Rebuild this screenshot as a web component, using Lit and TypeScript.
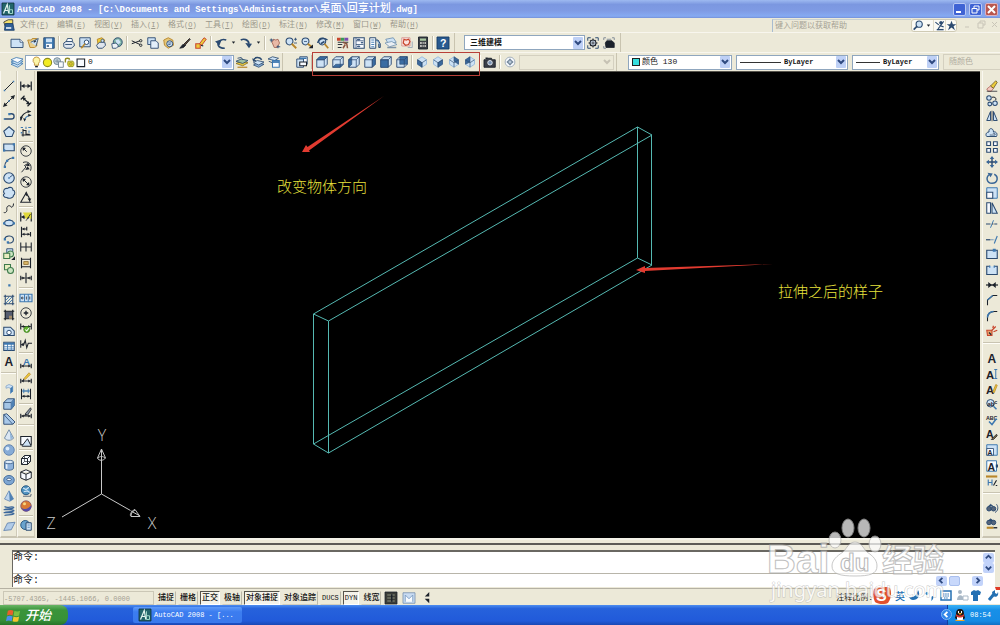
import { LitElement, html, svg, css } from 'lit';
import { customElement } from 'lit/decorators.js';
import { classMap } from 'lit/directives/class-map.js';

/* ---------- icon library: every icon is a list of strokes on a 16 x 16 grid ---------- */

type Stroke = [d: string, stroke: string, fill?: string, width?: number];
type Glyph = { t: string; x: number; y: number; s: number; c: string };
type Part = Stroke | Glyph;

const K = '#1c222b';
const N = '#2b4a70';
const B = '#3d78b0';
const L = '#cde2f5';
const M = '#8fb4da';
const W = '#f8fbff';
const G = '#b8862a';
const Y = '#eccb3a';
const R = '#c8452c';
const O = 'none';

const ring = (x: number, y: number, r: number) =>
  `M${x - r} ${y}a${r} ${r} 0 1 0 ${2 * r} 0a${r} ${r} 0 1 0 ${-2 * r} 0z`;
const box = (x: number, y: number, w: number, h: number) => `M${x} ${y}h${w}v${h}h${-w}z`;
const dimBase: Stroke[] = [
  ['M1 2v12M15 2v12M2 8h12', K, O, 1.6],
  ['M2 8l4-3v6zM14 8l-4-3v6z', O, K],
];
const lowDim: Stroke[] = [
  ['M1 9v6M15 9v6M2 12h12', K, O, 1.5],
  ['M2 12l3-2v4zM14 12l-3-2v4z', O, K],
];
const cube = (face: string): Stroke[] => [
  ['M1 5l4-4h10v10l-4 4H1z', N, L, 1.2],
  [face, N, '#3a6da3', 0.8],
  ['M1 5h10v10M11 5l4-4', N, O, 1],
];
const iso = (face: string): Stroke[] => [
  ['M8 1l6 4v6l-6 4-6-4V5z', M, L, 1.1],
  [face, N, '#3a689b', 0.8],
  ['M2 5l6 4 6-4M8 9v6', N, O, 0.9],
];

const icons: Record<string, Part[]> = {
  new: [['M0 3h12l4 4v7H0z', N, L, 1.2], ['M12 3v4h4', N, W, 1]],
  open: [['M1 4h5l1-2h6v10l-3 2H4z', G, '#e9cf8b', 1.2], ['M5 7l10-5-3 10', N, L, 1.1], ['M9 7l3-2', K, O, 1.4]],
  save: [[box(1, 1, 14, 14), N, B, 1.2], [box(4, 2, 8, 5), O, L], [box(4, 9, 8, 6), O, W], ['M5 12h3', N, O, 2]],
  plot: [['M4 7l2-5h6l1 5', N, W, 1.1], ['M1 8l3-2h8l3 3v3l-4 3H4l-3-2z', N, '#dfe6ee', 1.2], ['M3 10h9', N, O, 1.2]],
  preview: [[box(1, 1, 14, 12), N, L, 1.2], [ring(10, 7, 3), N, W, 1.3], ['M8 9l-5 6', G, O, 2]],
  publish: [['M3 3l6-2 4 3-2 5-7 1z', G, Y, 1.2], ['M2 11l4-4h7l1 4-4 4H4z', N, '#dfe6ee', 1.2], [ring(10, 5, 2), N, L, 1]],
  dwf: [[ring(9, 7, 6), N, '#7bb0a0', 1.2], ['M6 4l4-1 3 4-3 3-3-2z', O, L], ['M1 9l6-1 3 4-3 3H2z', N, '#eef2f6', 1.1]],
  cut: [['M1 5l11 5M1 9l11-4', K, O, 1.3], [ring(13, 5, 1.6), K, O, 1.2], [ring(13, 11, 1.6), K, O, 1.2]],
  copy: [[box(1, 1, 10, 9), N, L, 1.2], ['M5 5h7l3 3v7H5z', N, '#e3effa', 1.2]],
  paste: [['M1 4l6-3 6 3 1 7-7 4-5-4z', G, '#e5c676', 1.2], [ring(9, 9, 4), N, L, 1.2], ['M7 8h4M7 10h3', N]],
  match: [['M1 15l4-5 4 1-3 3z', K, K], ['M6 10l8-8 1 1-7 8z', K, '#6a4a30', 1.2]],
  block: [['M1 15V9h6v6z', R, Y, 1.4], ['M6 9l6-8 3 2-6 8z', R, Y, 1.3], ['M8 11l3 1', K, O, 1.6]],
  undo: [['M13 15C3 15 2 8 7 5c2-2 5-2 8-1', N, O, 2.2], ['M0 6l9-3-3 8z', O, N]],
  redo: [['M1 4c4-2 10-1 11 5', N, O, 2.2], ['M7 8l9 1-4 6z', O, N]],
  drop: [['M5 6h6l-3 4z', O, K]],
  pan: [['M4 7l2-4 3 1 3-1 2 5-3 6H7z', '#a06050', '#e9b9a6', 1.1], ['M1 4h5M3 2v5M12 11v4M10 13h5', N, O, 1.2]],
  zoomrt: [[ring(6, 6, 4.6), N, L, 1.4], ['M9 9l6 6', G, O, 2.4], ['M12 3h4M14 1v4M12 8h4', N, O, 1.1]],
  zoomwin: [[ring(6, 6, 4.6), N, L, 1.4], ['M4 6h4', N], ['M9 9l5 4', G, O, 2.4], ['M10 15h6v-5z', O, K]],
  zoomprev: [[ring(7, 6, 4.6), N, L, 1.4], ['M10 9l5 6', G, O, 2.4], ['M1 8c1-6 8-8 13-4', N, O, 2], ['M5 9l5-3', N, O, 2]],
  props: [['M0 1h5v4H0z', O, R], ['M5 1h5v4H5z', O, '#3b9a56'], ['M10 1h5v4h-5z', O, '#7b4bb0'], ['M1 7h14M1 10h6M1 14h5', K, O, 1.2], ['M8 7l5 2 1 6M8 15l3-5', '#8a5540', O, 2]],
  dcenter: [[box(1, 1, 14, 14), N, W, 1.4], ['M4 1v14M4 5h10M4 10h10', N], [box(6, 3, 3, 1), N, B], [box(11, 7, 2, 1), N, B], [box(6, 12, 3, 1), N, B]],
  palettes: [[box(1, 1, 8, 14), N, W, 1.3], ['M3 4h4M3 7h4M3 10h4M3 13h4', B, O, 1.2], ['M9 4h3l3 5v5h-2V9', N, M, 1.3]],
  sheet: [['M1 3l10-2 4 6-10 3z', '#6b8dad', L, 1.1], ['M0 8l9-2 7 4-10 3z', '#6b8dad', '#e9eef3', 1], ['M3 14h12', '#7d93a8', O, 2]],
  markup: [['M1 1h11v11H1z', '#d08a88', '#fbe3e0', 1], ['M4 3l3 1 3-1 2 3-2 4-4 1-3-3z', R, O, 1.6], ['M9 14h6V6', '#9aa8b8', O, 1.2]],
  calc: [[box(2, 0, 12, 16), K, '#3d4046', 1.2], [box(4, 2, 8, 3), O, '#a8c7a0'], ['M4 8h8M4 12h8', '#e8e4e0', O, 2], ['M7 6v9M9.5 6v9', '#3d4046', O, 1]],
  help: [[box(0, 0, 16, 16), '#153a66', '#28598f', 1.2], { t: '?', x: 4, y: 13, s: 14, c: '#fff' }],
  gear: [['M1 5V1h4M11 1h4v4M15 11v4h-4M5 15H1v-4', N, O, 1.3], [ring(8, 8, 4), K, '#b7c4d3', 1.4], [ring(8, 8, 1.3), K, W, 1], ['M8 2v2M8 12v2M2 8h2M12 8h2M4 4l1 1M11 11l1 1M12 4l-1 1M5 11l-1 1', K, O, 1.4]],
  home: [['M1 4V1h3M12 1h3v3M1 12v3h3', '#7c8794', O, 1.2], ['M3 8l2-3h7l3 3v6H4z', K, K], ['M5 3h6', '#7c8794', O, 1.2]],
  layers: [['M0 11l7-3 9 2-7 5z', B, L, 1.1], ['M0 8l7-3 9 2-7 5z', B, L, 1.1], ['M0 5l7-3 9 2-7 5z', B, W, 1.1]],
  layercur: [['M0 10l7-3 9 2-7 4z', '#84712c', Y, 1.1], ['M0 7l7-3 9 2-7 4z', N, '#9fc0a2', 1.1], ['M2 15h13', G, O, 1.6], ['M2 3l5-1 2 3', N, O, 1.2]],
  layerprev: [['M2 12l5-3 9 2-7 4z', N, M, 1.1], ['M2 9l5-3 9 2-7 4z', N, L, 1.1], ['M2 6c1-5 8-5 11-1', N, O, 2], ['M0 3l2 5 4-2z', O, N]],
  layerstate: [['M0 4l6-3 8 2-5 3z', N, L, 1.1], ['M1 7l5 2', N, O, 1.2], [box(6, 6, 9, 9), B, W, 1.4], ['M6 8h9', B, O, 2.4]],
  bulb: [['M8 0a5 5 0 0 0-3 9v3h6V9A5 5 0 0 0 8 0z', G, '#fdf6a8', 1.2], ['M6 14h4', K, O, 2]],
  sun: [[ring(8, 8, 6), '#8f8c20', '#f3ec22', 1.6]],
  freeze: [[ring(6, 6, 5), '#6d8293', '#bfd0d8', 1.3], [box(8, 7, 7, 8), '#6d8293', W, 1.3], ['M3 6h6M6 3v6', '#6d8293']],
  lock: [['M2 8V4c0-3 6-3 6 0', '#8e8a22', O, 2], ['M6 6h7c2 2 2 6 0 8H7c-2-2-2-6-1-8z', '#8e8a22', '#d9d438', 1.2], [ring(10, 10, 2), '#8e8a22', Y]],
  square: [[box(3, 3, 11, 11), K, W, 1.6]],
  named: [['M5 1h10v10H5z', N, W, 1.2], ['M1 4h9v11H1z', N, L, 1.2], ['M5 8h9v5H5z', K, W, 1.4], ['M5 3h9', B, O, 2]],
  vtop: cube('M1 5l4-4h10l-4 4z'),
  vbottom: cube('M1 15l4-4h10l-4 4z'),
  vleft: cube('M1 5l4-4v10l-4 4z'),
  vright: cube('M11 5l4-4v10l-4 4z'),
  vfront: cube('M1 5h10v10H1z'),
  vback: cube('M5 1h10v10H5z'),
  isosw: iso('M2 5l6 4v6l-6-4z'),
  isose: iso('M14 5l-6 4v6l6-4z'),
  isone: iso('M8 1l6 4v6l-6-4z'),
  isonw: iso('M8 1L2 5v6l6-3z'),
  camera: [['M0 5h4l1-2h5l1 2h4v10H0z', K, '#3a3f48', 1.2], [ring(8, 9, 3), '#dfe6ee', '#7a93b4', 1.3], ['M2 3h3', K, O, 2]],
  nav: [[ring(8, 8, 6.5), '#9aa7b4', W, 1.2], [ring(8, 8, 3), '#6f8196', '#b9c8d8', 1], ['M8 3l2 3H6zM8 13l2-3H6zM3 8l3-2v4zM13 8l-3-2v4z', O, '#6f8196']],
  star: [['M8 1l2 5h5l-4 3 2 6-5-4-5 4 2-6-4-3h5z', O, N]],
  find: [[ring(9, 6, 4.5), N, L, 1.6], ['M6 9l-5 5', N, O, 2.4]],
  comm: [['M2 3l5 4M14 2L6 13M8 8l6 2', N, O, 1.6], [ring(10, 4, 2), N, N], ['M4 14h10', N, O, 2]],

  line: [['M2 14L14 2', K, O, 1.3], [box(1, 13, 2, 2), O, B], [box(13, 1, 2, 2), O, B]],
  xline: [['M2 14L14 2', K, O, 1.3], ['M0 16l2-6 4 4zM16 0l-6 2 4 4z', O, K], [box(7, 7, 2, 2), O, B]],
  pline: [['M2 12h9c5 0 5-7 0-7H9', N, O, 1.8], [box(1, 11, 2, 2), O, B], [box(7, 4, 3, 3), O, B]],
  polygon: [['M8 1l7 6-3 7H4L1 7z', N, L, 1.4]],
  rect: [[box(1, 4, 14, 9), N, L, 1.5], [box(0, 11, 3, 3), O, B], [box(13, 3, 3, 3), O, B]],
  arc: [['M2 15C2 8 7 3 14 2', N, O, 1.5], [box(1, 13, 3, 3), O, B], [box(12, 1, 3, 3), O, B], [box(4, 5, 3, 3), O, B]],
  circle: [[ring(8, 8, 7), N, L, 1.5], [box(7, 7, 2, 2), O, B], ['M9 7l4-3', N, O, 1.2]],
  cloud: [['M5 14c-4 0-6-4-3-5-3-4 0-8 4-7 3-3 8-1 7 2 4 1 3 6 1 7 0 4-6 5-9 3z', N, L, 1.4]],
  spline: [['M1 14c3 1 5-2 4-5 0-5 5-5 6-2 2 0 3-2 3-5', K, O, 1.3]],
  ellipse: [['M2 8c0-5 12-5 12 0s-12 5-12 0z', N, L, 1.5], [box(0, 7, 3, 3), O, B], [box(13, 7, 3, 3), O, B], [box(7, 3, 3, 2), O, B]],
  earc: [['M2 8c2-6 12-5 12 1 0 4-5 5-8 4', N, O, 1.5], [box(1, 7, 3, 3), O, B], [box(5, 11, 3, 3), O, B]],
  insert: [[box(5, 1, 8, 7), N, L, 1.2], [ring(10, 8, 4), '#3d7a4a', '#cce5c2', 1.4], [box(1, 7, 8, 7), '#3d7a4a', '#e8edc0', 1.4], ['M11 16h5v-5z', O, K]],
  mkblock: [[box(2, 2, 8, 7), '#3d7a4a', '#e8edc0', 1.4], [ring(10, 10, 4), '#3d7a4a', '#cce5c2', 1.4]],
  point: [[box(7, 7, 3, 3), O, B]],
  hatch: [['M3 1v14M13 1v14M1 3h14M1 13h14', N, O, 1.4], ['M4 8l4-4M4 12l8-8M8 12l4-4', B, O, 1.2]],
  gradient: [[box(3, 3, 10, 10), O, '#555d70'], ['M3 1v14M13 1v14M1 3h14M1 13h14', K, O, 1.6], ['M8 9h4v4H8z', O, '#a58d6a']],
  region: [['M1 3h9l5 5v6H1z', N, L, 1.4], [ring(8, 10, 3), N, W, 1.3]],
  table: [[box(1, 3, 14, 11), N, W, 1.4], ['M1 5h14', B, O, 2.6], ['M1 9h14M1 12h14M6 4v10M11 4v10', B, O, 1.1]],
  mtext: [{ t: 'A', x: 2, y: 14, s: 16, c: K }],
  polysolid: [['M4 4l4-2 5 2v7l-3 3V7L7 6l-3 1z', '#89a8c8', L, 1.1], ['M10 7l3-3v7l-3 3z', O, B]],
  solidbox: [['M1 6l5-5h9v9l-4 5H1z', N, '#a4c5e6', 1.2], ['M1 6h10v9M11 6l4-5', N, O, 1], ['M11 6l4-5v9l-4 5z', O, '#4e81b5']],
  wedge: [['M1 2l4-1 11 11-3 3H1z', N, '#a9c8e8', 1.2], ['M1 2l12 13', N, O, 1]],
  cone: [['M8 1l6 11c-2 4-10 4-12 0z', '#6b84a0', '#dbe7f3', 1.2], ['M9 3l4 9-3 2z', O, M]],
  sphere: [[ring(8, 8, 7), '#5e80ad', '#86abd6', 1.2], [ring(6, 6, 2.5), O, '#dcebfa']],
  cylinder: [['M2 4v8c0 4 12 4 12 0V4', '#46688f', '#8eb2dc', 1.2], ['M2 4c0-3 12-3 12 0s-12 3-12 0z', '#46688f', '#dceaf8', 1.2], ['M5 7v6', W, O, 1.6]],
  torus: [['M1 8c0-8 14-8 14 0s-14 9-14 0z', '#3e689a', '#7ea6d2', 1.2], ['M5 7c1-2 5-2 6 0s-6 3-6 0z', '#2f5480', W, 1.1]],
  pyramid: [['M8 1l6 11-5 3-7-3z', '#5e80ad', '#bcd4ee', 1], ['M8 1l6 11-5 3z', O, '#4e81b5']],
  helix: [['M2 2c4 3 10-1 12 1s-9 2-12 3 9-1 12 1-9 2-12 3 9-1 12 1-9 2-12 3', '#3b679b', O, 1.7]],
  plane: [['M6 4l10-1-5 10-10 1z', '#5e80ad', '#b2cce8', 1.1]],

  dlin: dimBase,
  dalign: [['M1 6l5-5M10 15l5-5M4 4l9 8', K, O, 1.5], ['M3 3l5 1-3 4zM13 13l-5-1 3-4z', O, K]],
  darc: [['M1 14C1 7 7 2 14 2', K, O, 1.4], ['M6 15c0-4 3-8 9-8', B, O, 1.4], ['M15 2l-5-2v4zM1 14l-1-5h4z', O, K], ['M6 15l-2-4 4 1zM15 7l-4-2v4z', O, K]],
  dord: [['M4 4v10M2 12h12M4 6h4v5h5', K, O, 1.4], ['M8 1v3M11 2h4M1 2h3M12 6v3', B, O, 1.4], [box(1, 8, 2, 2), O, B]],
  drad: [[ring(8, 8, 7), K, O, 1.1], ['M9 9L4 4', K, O, 1.3], ['M3 3l5 1-4 4z', O, K]],
  djog: [['M4 2c7-3 13 3 10 11M2 15l6-7-2-2 5-3', K, O, 1.2], ['M7 6l5-3 1 4zM7 12l6-1-3-4z', O, K]],
  ddia: [[ring(8, 8, 7), K, O, 1.1], ['M4 4l8 8', K, O, 1.3], ['M3 3l5 1-4 4zM13 13l-5-1 4-4z', O, K]],
  dang: [['M9 1L1 15h14M8 4c3 2 5 5 5 10', K, O, 1.4], ['M13 14l-3-4h5zM7 2l4 2-3 3z', O, K]],
  dquick: [...dimBase, ['M4 2h11v9l-4-3-3 3z', O, '#e0d83a'], ['M8 13l6-9', K]],
  dbase: [['M2 1v14M9 1v5M14 8v6M3 4h6M3 11h10', K, O, 1.5], ['M3 4l3-2v4zM3 11l3-2v4zM13 11l-3-2v4z', O, K]],
  dcont: [['M1 2v12M8 2v12M15 2v12M1 8h14', K, O, 1.4]],
  dspace: [['M2 1v14M14 1v14M2 3h12M2 13h12', K, O, 1.5], [box(5, 6, 6, 4), '#8a6a2a', '#d9b566', 1]],
  dbreak: [['M8 1v14M1 8h6M9 8h6M1 5v6M15 5v6', K, O, 1.5], ['M6 8L3 6v4zM10 8l3-2v4z', O, K]],
  tol: [[box(0, 3, 16, 10), B, L, 1.5], ['M6 3v10M11 3v10', B, O, 1.3], [ring(3, 8, 1.2), K], ['M8.5 6v4M13 6v4', K]],
  center: [[ring(8, 8, 7), K, O, 1.1], ['M8 5v6M5 8h6', K, O, 1.8]],
  inspect: [['M1 2v8M15 2v8M2 6h12', K, O, 1.5], ['M2 6l3-2v4zM14 6l-3-2v4z', O, K], [ring(9, 10, 4), '#3c7a1f', '#62b330', 1], ['M7 10l2 2 3-4', W, O, 1.4]],
  jogline: [['M1 3v10M2 9h3l2-6 2 10 2-6h5', K, O, 1.4], ['M1 9l4-3v5z', O, K]],
  dedit: [...lowDim, { t: 'A', x: 4, y: 11, s: 13, c: B }],
  dtedit: [...lowDim, ['M5 9l7-8 2 2-7 7z', G, Y, 1], ['M5 9l1 2-3 1z', O, K]],
  dupdate: [['M2 1v14M14 1v14', K, O, 1.4], ['M3 4h10', B, O, 1.8], ['M3 11h10', K, O, 1.5], ['M5 1v6M11 1v6', B, O, 1.2], ['M3 11l3-2v4zM13 11l-3-2v4z', O, K]],
  dstyle: [...lowDim, ['M7 9l7-8 1 2-5 8z', K, '#8a94a0', 1], ['M5 12l2-3 3 2z', O, K]],
  ucs: [[box(1, 2, 14, 11), K, W, 1.4], ['M3 14l7-9 5 10H3z', K, L, 1.3]],
  wire3: [['M2 6l4-4h8v8l-4 4H2zM2 6h8v8M10 6l4-4', K, W, 1.3], ['M6 2v8h8M6 10l-4 4', K, O, 0.9]],
  hidden3: [['M8 1l7 3v8l-7 3-7-3V4zM1 4l7 3 7-3M8 7v8', K, W, 1.3]],
  real: [[ring(8, 7, 6), '#1e4d78', '#4f94c0', 1.2], ['M4 4l4 2 4-3M5 9l5-1 3 2', L, O, 1.6], ['M4 15h10l1-3', '#67717c', O, 1.4]],
  concept: [[ring(8, 8, 7), '#7c4b62', '#d97a34', 1], ['M2 10c4 4 9 2 13-3 1 9-10 12-13 3z', O, '#574da8'], [ring(6, 5, 2), O, '#f8d680']],
  vsman: [[ring(7, 8, 6), '#1e4d78', '#6aa3cd', 1.2], [box(8, 5, 7, 10), N, L, 1.3], ['M10 8h3M10 11h3', B]],

  erase: [['M1 12l5-4 4 3-3 4H3z', '#b06a60', '#f3c9c0', 1.1], ['M6 8l7-7 2 2-5 8z', '#6d5a30', Y, 1.1], ['M1 15h14', K, O, 1]],
  mcopy: [[ring(4, 4, 3), N, L, 1.4], [ring(5, 12, 2.5), N, L, 1.4], [ring(12, 11, 3), N, L, 1.4], ['M8 3c4-1 6 1 5 4', K, O, 1.3]],
  mirror: [['M6 2v12H1zM10 2v12h5z', N, L, 1.3], ['M8 1v14', K, O, 1]],
  offset: [['M1 14h13c2-4-1-7-4-6 0-6-7-6-6 0-4 0-5 4-3 6z', N, L, 1.3], ['M5 12h7c1-2-1-3-3-2', N, W, 1.1]],
  array: [[box(1, 1, 5, 5), N, W, 1.5], [box(10, 1, 5, 5), N, W, 1.5], [box(1, 10, 5, 5), N, W, 1.5], [box(10, 10, 5, 5), N, W, 1.5]],
  move: [['M8 2v12M2 8h12', N, O, 1.9], ['M8 0l3 4H5zM8 16l3-4H5zM0 8l4-3v6zM16 8l-4-3v6z', O, '#3a6797']],
  rotate: [['M5 3c-6 4-4 12 3 12 8 0 9-9 3-12', '#3a6797', O, 2], ['M2 1l7 1-3 5z', O, '#3a6797']],
  scale: [[box(1, 1, 14, 14), B, L, 1.3], [box(1, 7, 8, 8), N, W, 1.4]],
  stretch: [['M1 1h5v14H1z', N, W, 1.4], ['M8 1l7 14H8z', N, L, 1.4]],
  trim: [['M0 8h6M11 8h4', N, O, 1.6], ['M6 13l4-10', B, O, 1.3], ['M8 8h2', K, O, 1]],
  extend: [['M0 9h6', N, O, 1.6], ['M7 9h2M10 9h1', B, O, 1.2], ['M11 14l4-10', B, O, 1.5]],
  brkpt: [[box(1, 3, 14, 11), N, L, 1.5], [box(9, 1, 4, 4), O, B]],
  brk: [['M5 3H1v11h14V3h-4', N, L, 1.5], ['M5 2v3M11 2v3', B, O, 1.6]],
  join: [['M0 8h16', K, O, 1.6], ['M8 8L3 4v8zM8 8l5-4v8z', O, K]],
  chamfer: [['M2 15V8l7-6h6', K, O, 1.4], ['M2 8l7-6', B, O, 1.5]],
  fillet: [['M2 15V11C2 5 6 2 11 2h4', K, O, 1.4], ['M2 10c0-5 4-8 8-8', B, O, 2.1]],
  explode: [['M1 7h7v7H2z', R, '#e9a06a', 1.4], ['M8 7l5-5M10 9l5-2M9 4l1-3', R, O, 1.6], ['M4 10l3 3', K, O, 1.5]],
  dtext: [{ t: 'A', x: 0, y: 14, s: 15, c: K }, ['M11 2h4M13 2v12M11 14h4', B, O, 1.3]],
  tedit: [{ t: 'A', x: 0, y: 14, s: 15, c: K }, ['M9 12l4-10 2 1-4 10z', G, Y, 1]],
  tfind: [[ring(6, 7, 5), N, L, 1.3], { t: 'ab', x: 2, y: 10, s: 8, c: K }, ['M10 11l4 4', B, O, 2], { t: 'c', x: 11, y: 8, s: 7, c: K }],
  spell: [{ t: 'ABC', x: 0, y: 8, s: 7, c: K }, ['M4 10l4 4 6-8', B, O, 2]],
  tstyle: [{ t: 'A', x: 0, y: 12, s: 14, c: K }, ['M7 14l7-7 1 2-5 5z', K, '#7d6a40', 1]],
  tscale: [[box(1, 1, 14, 14), B, L, 1.3], [box(1, 6, 9, 9), N, W, 1.1], { t: 'A', x: 2, y: 14, s: 9, c: K }],
  tjust: [[box(1, 1, 13, 14), B, W, 1.3], { t: 'A', x: 2, y: 14, s: 14, c: K }, [box(13, 6, 3, 4), O, N]],
  tspace: [['M0 2h15', G, O, 2.8], ['M3 6v8M3 10h5M8 6v8', B, O, 1.5], ['M10 14l4-7M13 14h2', K, O, 1.5]],
  orbit: [[ring(4, 9, 3), N, '#56657a', 1.3], [ring(10, 9, 3), N, '#56657a', 1.3], ['M3 6l3-3 4 3', N, N], ['M14 3c3 4 2 9-2 11', N, O, 1.2]],
  walk: [[ring(4, 6, 3), N, '#56657a', 1.3], [ring(10, 6, 3), N, '#56657a', 1.3], ['M3 4l3-3 4 3', N, N], ['M1 13h9', G, O, 2.8], ['M10 13h5', K, O, 1.8]],
  dwg: [['M1 4l6-3h6v9H3z', K, '#f4e06b', 1], ['M3 6h10l2 9H2z', '#173a66', '#2f5f97', 1.1], ['M4 12h7', '#fff', O, 2]],
  app: [[box(0, 0, 16, 16), '#0c2c33', '#23656a', 1], ['M2 14L7 2l2 12M3 10h5', '#e4f4ef', O, 1.6], ['M10 3v11M10 9h4v5h-4', '#9fd8c8', O, 1.3]],
  model: [[box(0, 0, 16, 16), K, '#3b3d38', 1], ['M3 4h10M3 8h10M3 12h10', '#8c917f', O, 1.4], ['M9 3v10', K, O, 2]],
  layout: [[box(0, 1, 16, 14), '#6d88aa', '#c9dcf2', 1], ['M3 13V4l5 5 5-5v9', '#7c9cc2', W, 1.2]],
  spin: [['M11 0v6H5zM5 9h6v6z', O, K]],
};

const drawPart = (p: Part) =>
  Array.isArray(p)
    ? svg`<path d=${p[0]} stroke=${p[1]} fill=${p[2] ?? 'none'} stroke-width=${p[3] ?? 1}></path>`
    : svg`<text x=${p.x} y=${p.y} font-size=${p.s} fill=${p.c} font-weight="bold">${p.t}</text>`;

const glyph = (name: string) =>
  html`<svg class="glyph" viewBox="0 0 16 16" aria-hidden="true">${(icons[name] ?? []).map(drawPart)}</svg>`;

const bar = (items: string) =>
  items.split(' ').map((name) => {
    if (name === '|') return html`<span class="sep"></span>`;
    if (name === '||') return html`<span class="split"></span>`;
    if (name === 'drop') return html`<button class="tool narrow" aria-label="drop">${glyph(name)}</button>`;
    return html`<button class="tool" aria-label=${name}>${glyph(name)}</button>`;
  });

const chevron = (d = 'M2 3l3 3 3-3') =>
  html`<svg class="chev" viewBox="0 0 10 10" aria-hidden="true"><path d=${d}></path></svg>`;

const menus: [string, string][] = [
  ['文件', 'F'], ['编辑', 'E'], ['视图', 'V'], ['插入', 'I'], ['格式', 'O'], ['工具', 'T'],
  ['绘图', 'D'], ['标注', 'N'], ['修改', 'M'], ['窗口', 'W'], ['帮助', 'H'],
];

const modes: { label: string; on?: boolean; latin?: boolean }[] = [
  { label: '捕捉' }, { label: '栅格' }, { label: '正交', on: true }, { label: '极轴' },
  { label: '对象捕捉', on: true }, { label: '对象追踪' }, { label: 'DUCS', latin: true },
  { label: 'DYN', on: true, latin: true }, { label: '线宽' },
];

@customElement('app-root')
export class AppRoot extends LitElement {
  static styles = css`
    :host {
      display: flex;
      flex-direction: column;
      position: relative;
      height: 100vh;
      overflow: hidden;
      background: #ece9d8;
      color: #111;
      font: 8px/12px 'Liberation Mono', 'Noto Sans CJK SC', monospace;
    }
    * { box-sizing: border-box; }
    button, select, input {
      font: inherit;
      color: inherit;
      margin: 0;
      padding: 0;
      border: 0;
      border-radius: 0;
      background: none;
      outline: none;
    }
    .latin { font-size: 7px; }
    .glyph { display: block; width: 12px; height: 12px; flex: none; overflow: visible; font-family: 'Liberation Sans', sans-serif; }
    .grow { flex: 1; }

    .title {
      display: flex;
      align-items: center;
      flex: none;
      height: 18px;
      padding: 0 2px;
      gap: 3px;
      background: linear-gradient(#9db9f0 0, #7b97e0 25%, #7f9be4 60%, #86aaf2 90%, #7390d8 100%);
      color: #fff;
      font-size: 9px;
      font-weight: bold;
      white-space: pre;
    }
    .title h1 { margin: 0; font: inherit; flex: 1; }
    .title .han { font-size: 11px; font-weight: 500; }
    .win {
      width: 13px;
      height: 13px;
      border: 1px solid #b9c9f4;
      border-radius: 2px;
      background: #3f63d4;
    }
    .win.close { background: #b9574f; border-color: #dcb0c0; }
    .win svg { display: block; width: 11px; height: 11px; fill: none; stroke: #fff; stroke-width: 2; }
    .win svg.thin { stroke-width: 1; }

    .menu {
      display: flex;
      align-items: center;
      flex: none;
      height: 14px;
      padding-left: 3px;
      color: #9a978b;
    }
    .menu nav { display: flex; flex: 1; padding-left: 5px; gap: 7px; }
    .menu nav button { width: 30px; white-space: nowrap; text-align: left; line-height: 14px; }
    .ask {
      width: 139px;
      height: 13px;
      padding-left: 2px;
      border-left: 1px solid #a8bcd0;
      border-top: 1px solid #c8d0d0;
    }
    .ask::placeholder { color: #a5a295; opacity: 1; }
    .quick { display: flex; align-items: center; width: 46px; height: 13px; padding: 0 1px; border: 1px solid #cfcab4; border-radius: 3px; background: #fbfaf4; }
    .quick button { width: 14px; height: 11px; border-left: 1px solid #e0dccb; }
    .quick button:first-child { border: 0; }
    .quick .narrow { width: 9px; border: 0; }
    .quick .glyph { width: 11px; height: 11px; margin: auto; }
    .quick .narrow .glyph { width: 9px; }
    .mdi { display: flex; width: 43px; padding-left: 7px; gap: 3px; }
    .mdi svg { width: 10px; height: 10px; fill: none; stroke: #c9c5b8; stroke-width: 1; display: block; }

    .row {
      display: flex;
      align-items: center;
      flex: none;
      height: 20px;
      border-top: 1px solid #f8f6ee;
    }
    .row.second { height: 19px; }
    .group { display: flex; align-items: center; height: 100%; border-right: 1px solid #c9c4b0; }
    .group.main { padding-left: 9px; padding-right: 3px; }
    .group.space { padding: 0 3px 0 9px; }
    .group.layer { padding-left: 9px; }
    .group.view { flex: none; padding-left: 11px; width: 334px; }
    .group.object { flex: 1; padding-left: 11px; gap: 4px; border: 0; }
    .tool { display: grid; place-items: center; width: 16px; height: 16px; flex: none; }
    .tool.narrow { width: 9px; }
    .tool.narrow .glyph { width: 9px; height: 9px; }
    .sep { width: 2px; height: 14px; margin: 0 1px; flex: none; border-left: 1px solid #c5c0ad; border-right: 1px solid #fffef8; }
    .combo {
      display: flex;
      align-items: center;
      height: 15px;
      padding: 0 1px 0 5px;
      border: 1px solid #8fa6be;
      background: #fff;
      color: #151515;
      font-weight: bold;
    }
    .combo select { flex: 1; min-width: 0; appearance: none; height: 13px; }
    .combo .chev { width: 10px; height: 12px; flex: none; background: #bed0f6; border-radius: 1px; stroke: #2f4a80; }
    .combo.off { background: none; border-color: #d4d0c0; }
    .combo.off .chev { background: none; stroke: #c6c2b4; }
    .combo .glyph { width: 11px; height: 11px; }
    .combo.layers { width: 209px; font-weight: normal; }
    .combo.layers select { padding-left: 2px; }
    .combo.work { width: 121px; }
    .combo.views { flex: 1; margin: 0 2px 0 1px; }
    .combo.color { width: 104px; font-weight: normal; padding-left: 3px; gap: 2px; }
    .combo.type { width: 112px; padding-left: 3px; gap: 3px; }
    .combo.weight { width: 87px; padding-left: 3px; gap: 3px; }
    .combo.plot { flex: 1; height: 16px; color: #b0ac9f; font-weight: normal; border-right: 0; }
    .swatch { width: 8px; height: 8px; border: 1px solid #222; background: #35dede; }
    .rule { width: 41px; height: 1px; background: #333; }
    .weight .rule { width: 24px; }
    .chev { display: block; fill: none; stroke: #2f4a80; stroke-width: 2; }
    .mark {
      position: absolute;
      left: 312px;
      top: 52px;
      width: 168px;
      height: 24px;
      border: 1px solid #b84038;
      pointer-events: none;
    }

    .work-area { display: flex; flex: 1; min-height: 0; }
    .palette {
      display: flex;
      flex-direction: column;
      align-items: center;
      width: 18px;
      padding-top: 7px;
      border-right: 1px solid #cfcab8;
      border-left: 1px solid #faf8f0;
      border-bottom: 2px solid #c9c4b2;
    }
    .palette .tool { flex: 1; min-height: 0; height: auto; }
    .palette .sep { width: 14px; height: 2px; margin: 1px 0; border: 0; border-top: 1px solid #c5c0ad; border-bottom: 1px solid #fffef8; }
    .palette .split { flex: none; align-self: stretch; height: 2px; margin: 3px 0 7px; background: #c9c4b2; border-bottom: 1px solid #fffef8; }
    .palette.draw { padding-bottom: 2px; width: 17px; }
    .palette.dim { padding-bottom: 3px; }
    .palette.edit { padding-bottom: 5px; margin-left: 2px; border-right: 0; }
    .canvas { flex: 1; min-width: 0; margin-left: 2px; background: #000; border-top: 1px solid #55534c; }
    .canvas svg { display: block; width: 100%; height: 100%; }
    .solid { fill: none; stroke: #55b9b2; stroke-width: 1; }
    .axis { fill: none; stroke: #c8c8c8; stroke-width: 1; }
    .arrow { fill: #e23b30; }
    .note { fill: #e8e23c; font: 15px 'Noto Sans CJK SC', sans-serif; font-weight: 300; }
    .axis-name { fill: #c8c8c8; font: 300 16px 'Open Sans', sans-serif; text-anchor: middle; }

    .command { flex: none; padding: 3px 5px 1px 12px; border-top: 2px solid #f4f2e8; }
    .command::before { content: ''; display: block; height: 2px; margin: 0 -5px 5px -12px; background: #5c5a55; }
    .lines { display: grid; grid-template-columns: 1fr 13px; border-top: 2px solid #6a6862; border-left: 1px solid #6a6862; background: #fff; font-size: 10px; }
    .history { height: 22px; line-height: 11px; border-bottom: 1px solid #b8b5aa; }
    .updown { display: grid; align-content: space-evenly; justify-items: center; height: 22px; }
    .entry { display: flex; align-items: center; grid-column: 1 / -1; height: 13px; padding-right: 12px; gap: 2px; }
    .entry label { line-height: 13px; }
    .entry input { flex: 1; min-width: 0; height: 12px; }
    .scroll { width: 11px; height: 10px; border-radius: 2px; background: #c2d3fa; display: grid; place-items: center; }
    .scroll .chev { width: 9px; height: 9px; }
    .thumb { width: 11px; height: 10px; border: 1px solid #a9bfee; border-radius: 2px; background: #c8d8fb; margin-right: 10px; }

    .status { display: flex; align-items: center; flex: none; height: 17px; padding: 1px 0 0 3px; gap: 2px; border-top: 1px solid #b5b1a3; }
    .coords { width: 151px; height: 14px; padding-top: 1px; border: 1px solid #cbc7b6; color: #a5a193; white-space: pre; }
    .mode { height: 14px; padding: 0 1px; border: 1px solid transparent; border-right-color: #bcb8a8; border-bottom-color: #d2cebd; font-weight: 500; white-space: nowrap; }
    .mode.on { border-color: #55534c #fff #fff #55534c; background: #f5f3ea; }
    .status .glyph { margin: 0 2px; }
    .scale { margin-right: 127px; white-space: nowrap; }

    .ime {
      position: absolute;
      right: 0;
      bottom: 21px;
      display: flex;
      align-items: center;
      width: 128px;
      height: 17px;
      background: #fff;
    }
    .ime svg { display: block; width: 100%; height: 100%; }
    .ime text { font: 500 10px 'Noto Sans CJK SC', sans-serif; fill: #2470b3; }
    .ime .s { font: bold 16px 'Liberation Sans', sans-serif; fill: #fff; }

    .taskbar { display: flex; align-items: center; flex: none; height: 20px; background: linear-gradient(#4d8df0 0, #2662dc 18%, #215ada 80%, #1a48b4 100%); color: #fff; }
    .start {
      display: flex;
      align-items: center;
      gap: 4px;
      width: 68px;
      height: 20px;
      padding-left: 6px;
      border-radius: 0 8px 8px 0;
      background: linear-gradient(#69b565 0, #3a943a 25%, #379138 75%, #27742a 100%);
      font: italic 500 13px 'Noto Sans CJK SC', sans-serif;
      line-height: 18px;
    }
    .start svg { width: 15px; height: 15px; flex: none; }
    .task {
      display: flex;
      align-items: center;
      gap: 3px;
      width: 109px;
      height: 16px;
      margin-left: 65px;
      padding-left: 6px;
      border-radius: 2px;
      background: linear-gradient(#5f9bf8, #3c7df0 30%, #3a79ec);
      white-space: pre;
    }
    .tray { display: flex; align-items: center; gap: 4px; width: 53px; height: 20px; padding-left: 6px; border-left: 1px solid #123f9c; background: linear-gradient(#3bb2f5 0, #1890e8 25%, #168be4 80%, #1270c4 100%); }
    .tray .penguin { width: 12px; height: 14px; }
    .expand { position: absolute; right: 48px; bottom: 5px; width: 11px; height: 11px; border-radius: 50%; background: #2f86ea; border: 1px solid #7db8f4; }
    .expand svg { width: 9px; height: 9px; stroke: #fff; }

    .watermark { position: absolute; right: 50px; bottom: 20px; width: 184px; height: 90px; pointer-events: none; opacity: 0.72; }
    .watermark svg { display: block; width: 100%; height: 100%; }
    .brand { font: bold 40px 'Liberation Sans', sans-serif; fill: #fff; stroke: #a8a8a8; stroke-width: 1; }
    .brand-han { font: bold 31px 'Noto Sans CJK SC', sans-serif; fill: #fff; stroke: #a8a8a8; stroke-width: 1; }
    .brand-du { font: bold 24px 'Liberation Sans', sans-serif; fill: #fff; stroke: #9c9c9c; stroke-width: 1; }
    .brand-url { font: 20px 'Noto Sans', sans-serif; fill: #fff; stroke: #b4b4b4; stroke-width: 1; paint-order: stroke; }
    .paw { fill: #fff; stroke: #b4b4b4; stroke-width: 1; }
  `;

  private renderTitle() {
    return html`<header class="title">
      ${glyph('app')}
      <h1>AutoCAD 2008 - [C:\\Documents and Settings\\Administrator\\<span class="han">桌面</span>\\<span class="han">回享计划</span>.dwg]</h1>
      <button class="win" aria-label="最小化"><svg viewBox="0 0 11 11"><path d="M2 8h5"></path></svg></button>
      <button class="win" aria-label="还原"><svg class="thin" viewBox="0 0 11 11"><path d="M4 4V2h5v4H7M2 4.500h5V9H2z"></path></svg></button>
      <button class="win close" aria-label="关闭"><svg viewBox="0 0 11 11"><path d="M2 2l7 7M9 2l-7 7"></path></svg></button>
    </header>`;
  }

  private renderMenu() {
    return html`<div class="menu">
      ${glyph('dwg')}
      <nav>${menus.map(([name, key]) => html`<button>${name}<span class="latin">(<u>${key}</u>)</span></button>`)}</nav>
      <input class="ask" type="text" aria-label="帮助" placeholder="键入问题以获取帮助" />
      <div class="quick">
        <button aria-label="find">${glyph('find')}</button>
        <button class="narrow" aria-label="find options">${glyph('drop')}</button>
        <button aria-label="communication">${glyph('comm')}</button>
        <button aria-label="favorites">${glyph('star')}</button>
      </div>
      <div class="mdi">
        <button aria-label="min"><svg viewBox="0 0 10 10"><path d="M1 7h4"></path></svg></button>
        <button aria-label="restore"><svg viewBox="0 0 10 10"><path d="M3 3V1h5v4H6M1 3h5v5H1z"></path></svg></button>
        <button aria-label="close"><svg viewBox="0 0 10 10"><path d="M2 2l5 5M7 2L2 7"></path></svg></button>
      </div>
    </div>`;
  }

  private renderToolbars() {
    return html`<div class="row">
        <div class="group main">
          ${bar('new open save | plot preview publish dwf | cut copy paste match block | undo drop redo drop | pan zoomrt zoomwin zoomprev | props dcenter palettes sheet markup calc | help')}
        </div>
        <div class="group space">
          <div class="combo work">
            <select aria-label="工作空间"><option>三维建模</option></select>${chevron()}
          </div>
          ${bar('gear home')}
        </div>
      </div>
      <div class="row second">
        <div class="group layer">
          ${bar('layers')}
          <div class="combo layers">
            ${['bulb', 'sun', 'freeze', 'lock', 'square'].map(glyph)}
            <select aria-label="图层"><option>0</option></select>${chevron()}
          </div>
          ${bar('layercur layerprev layerstate')}
        </div>
        <div class="group view">
          ${bar('named | vtop vbottom vleft vright vfront vback | isosw isose isone isonw | camera | nav')}
          <div class="combo off views"><select aria-label="视图" disabled></select>${chevron()}</div>
        </div>
        <div class="group object">
          <div class="combo color">
            <span class="swatch"></span>
            <select aria-label="颜色"><option>颜色 130</option></select>${chevron()}
          </div>
          <div class="combo type">
            <span class="rule"></span>
            <select class="latin" aria-label="线型"><option>ByLayer</option></select>${chevron()}
          </div>
          <div class="combo weight">
            <span class="rule"></span>
            <select class="latin" aria-label="线宽"><option>ByLayer</option></select>${chevron()}
          </div>
          <div class="combo off plot">随颜色</div>
        </div>
      </div>`;
  }

  private renderCanvas() {
    return html`<main class="canvas">
      <svg viewBox="37 72 943 466" role="img" aria-label="模型空间">
        <path class="solid" d="M313.500 314L637.500 127l14.500 8L328.500 321zM313.500 444l324-186 14.500 7L328.500 453zM313.500 314v130M328.500 321v132M637.500 127v131M651.500 135v130"></path>
        <path class="axis" d="M101.500 461v33L62 517M101.500 494l29 16.500M101.500 449l-4 9c1 3 6 3 8 0zM98 458c2-2 5-2 7 0M101.500 449v12M140 516.500l-9 0c-2-2 1-6 4-7zM131 516c0-3 2-5 4-6M140 516l-9-5"></path>
        <text class="axis-name" x="102" y="441">Y</text>
        <text class="axis-name" x="152" y="529">X</text>
        <text class="axis-name" x="51" y="529">Z</text>
        <path class="arrow" d="M384 96L309 150.500l1 1.500-8 0 4-7 1.500 2z"></path>
        <path class="arrow" d="M773 264L645 271v2l-9-3 9-4v2z"></path>
        <text class="note" x="277" y="192">改变物体方向</text>
        <text class="note" x="778" y="297">拉伸之后的样子</text>
      </svg>
    </main>`;
  }

  private renderCommand() {
    return html`<section class="command">
      <div class="lines">
        <div class="history">命令:</div>
        <div class="updown">
          <button class="scroll" aria-label="up">${chevron('M2 6l3-3 3 3')}</button>
          <button class="scroll" aria-label="down">${chevron()}</button>
        </div>
        <div class="entry">
          <label for="cmd">命令:</label><input id="cmd" type="text" />
          <button class="scroll" aria-label="left">${chevron('M6 2L3 5l3 3')}</button>
          <span class="thumb"></span>
          <button class="scroll" aria-label="right">${chevron('M4 2l3 3-3 3')}</button>
        </div>
      </div>
    </section>`;
  }

  private renderStatus() {
    return html`<footer class="status">
      <div class="coords latin">-5707.4365, -1445.1066, 0.0000</div>
      ${modes.map((m) => html`<button class=${classMap({ mode: true, on: !!m.on, latin: !!m.latin })}>${m.label}</button>`)}
      ${glyph('model')}${glyph('layout')}${glyph('spin')}
      <span class="grow"></span>
      <span class="scale">注释比例:</span>
    </footer>`;
  }

  private renderTaskbar() {
    return html`<div class="taskbar">
      <button class="start">
        <svg viewBox="0 0 16 16" aria-hidden="true">
          <path d="M2 3c2-1 4-1 6 0L7 8C5 7 3 7 1 8z" fill="#e8602c"></path>
          <path d="M9 3c2 1 4 1 6 0l-1 5c-2 1-4 1-6 0z" fill="#7cc142"></path>
          <path d="M1 9c2-1 4-1 6 0l-1 5c-2-1-4-1-6 0z" fill="#4a8ef0"></path>
          <path d="M8 9c2 1 4 1 6 0l-1 5c-2 1-4 1-6 0z" fill="#f4c52c"></path>
        </svg>开始
      </button>
      <button class="task latin">${glyph('app')}AutoCAD 2008 - [...</button>
      <span class="grow"></span>
      <div class="tray latin">
        <svg class="penguin" viewBox="0 0 12 14" aria-hidden="true">
          <path d="M6 1c3 0 4 2 4 5l1 4-1 1H2l-1-1 1-4c0-3 1-5 4-5z" fill="#1a1a1a"></path>
          <path d="M3 8h6v3c0 2-6 2-6 0z" fill="#fff"></path><path d="M2 6c2 2 6 2 8 0v2c-2 2-6 2-8 0z" fill="#d8372c"></path>
          <path d="M4 3h1v2H4zM7 3h1v2H7z" fill="#fff"></path><path d="M4 5h4l-2 2zM2 12h4v1H1zM6 12h4l1 1H6z" fill="#f2a623"></path>
        </svg>
        <time>08:54</time>
      </div>
      <button class="expand" aria-label="展开">${chevron('M6 2L3 5l3 3')}</button>
    </div>`;
  }

  private renderIme() {
    return html`<div class="ime">
      <svg viewBox="872 587 128 17" role="img" aria-label="输入法">
        <path d="M874 589c5-3 12-3 16-1 2 5 1 11-2 15-5 2-10 1-13-1-2-4-2-9-1-13z" fill="#e2502c"></path>
        <text class="s" x="876" y="601">S</text>
        <text x="895" y="600">英</text>
        <path d="M918 590c3 5 0 10-5 10-2 0-3-1-4-3 5 1 8-2 9-7z" fill="#2470b3"></path>
        <path d="M927 592a1.500 1.500 0 1 0 .1 0M932 596c2 0 2 3-1 5 1-2 0-3 1-5z" fill="#2470b3"></path>
        <path d="M941 591h10v9h-10z" fill="none" stroke="#2470b3" stroke-width="1.500"></path>
        <path d="M943 594h6M943 596h6M944 598h4" stroke="#2470b3" stroke-dasharray="1.500 .7"></path>
        <path d="M960 590a2 2 0 1 1 0 4 2 2 0 0 1 0-4zM957 600c0-6 6-6 6-2v2z" fill="#a9b8c6"></path>
        <path d="M963 596h5v4h-5z" fill="#fff" stroke="#a9b8c6"></path>
        <path d="M971 592l3-2c1 1 3 1 4 0l3 2-1 3h-2v6h-5v-6h-2z" fill="#2470b3"></path>
        <path d="M989 600l5-6" stroke="#2470b3" stroke-width="3"></path>
        <path d="M992 592l3-2v3l2 1 1-2c1 4-2 6-5 4z" fill="#2470b3"></path>
        <path d="M995 587h5v3h-4z" fill="#e03a24"></path>
      </svg>
    </div>`;
  }

  private renderWatermark() {
    return html`<div class="watermark">
      <svg viewBox="766 515 184 90" role="img" aria-label="Baidu">
        <ellipse class="paw" cx="848" cy="528" rx="6" ry="9"></ellipse>
        <ellipse class="paw" cx="864" cy="528" rx="6" ry="9"></ellipse>
        <ellipse class="paw" cx="835" cy="540" rx="6" ry="8"></ellipse>
        <ellipse class="paw" cx="875" cy="544" rx="6" ry="8"></ellipse>
        <path class="paw" d="M855 542c6 0 8 6 12 10 6 4 10 8 10 14 0 8-7 10-22 10s-23-2-23-10c0-6 5-10 11-14 4-4 6-10 12-10z"></path>
        <text class="brand" x="767" y="573">Bai</text>
        <text class="brand-du" x="840" y="571">du</text>
        <text class="brand-han" x="882" y="571">经验</text>
        <text class="brand-url" x="771" y="597">jingyan.baidu.com</text>
      </svg>
    </div>`;
  }

  render() {
    return html`
      ${this.renderTitle()} ${this.renderMenu()} ${this.renderToolbars()}
      <div class="work-area">
        <div class="palette draw">
          ${bar('line xline pline polygon rect arc circle cloud spline ellipse earc insert mkblock point hatch gradient region table mtext || polysolid solidbox wedge cone sphere cylinder torus pyramid helix plane')}
        </div>
        <div class="palette dim">
          ${bar('dlin dalign darc dord | drad djog ddia dang | dquick dbase dcont dspace dbreak | tol center inspect jogline | dedit dtedit dupdate | dstyle || ucs | wire3 hidden3 real concept | vsman')}
        </div>
        ${this.renderCanvas()}
        <div class="palette edit">
          ${bar('erase mcopy mirror offset array move rotate scale stretch trim extend brkpt brk join chamfer fillet explode || mtext dtext tedit tfind spell tstyle tscale tjust tspace || orbit walk')}
        </div>
      </div>
      ${this.renderCommand()} ${this.renderStatus()} ${this.renderTaskbar()}
      <div class="mark"></div>
      ${this.renderIme()} ${this.renderWatermark()}
    `;
  }
}
